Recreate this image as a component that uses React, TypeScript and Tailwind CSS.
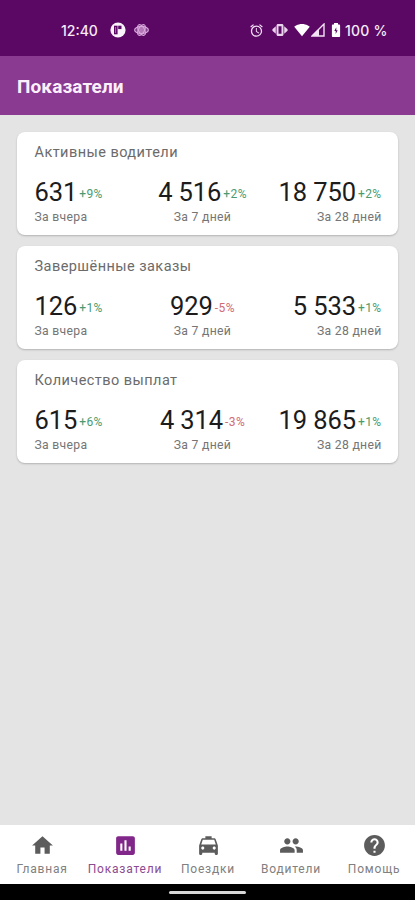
import React from "react";
import {
  MdAlarm,
  MdAssessment,
  MdHelp,
  MdHome,
  MdLocalTaxi,
  MdPeople,
  MdSignalWifi4Bar,
} from "react-icons/md";

const periods = ["За вчера", "За 7 дней", "За 28 дней"];

const metrics = [
  {
    title: "Активные водители",
    values: [["631", "+9%"], ["4 516", "+2%"], ["18 750", "+2%"]],
  },
  {
    title: "Завершённые заказы",
    values: [["126", "+1%"], ["929", "-5%"], ["5 533", "+1%"]],
  },
  {
    title: "Количество выплат",
    values: [["615", "+6%"], ["4 314", "-3%"], ["19 865", "+1%"]],
  },
];

const tabs = [
  { label: "Главная", icon: MdHome },
  { label: "Показатели", icon: MdAssessment, active: true },
  { label: "Поездки", icon: MdLocalTaxi },
  { label: "Водители", icon: MdPeople },
  { label: "Помощь", icon: MdHelp },
];

const alignment = ["items-start", "items-center", "items-end"];

const StatusBar: React.FC = () => (
  <div className="flex h-14 shrink-0 items-center bg-[#5a0864] pt-1 pr-[27px] pl-[61px] font-['Inter','Roboto',sans-serif] text-[14px] font-medium text-[#f6ebf7]">
    <span className="w-[37px] whitespace-nowrap">12:40</span>
    <svg className="ml-[12px] h-4 w-4" viewBox="0 0 16 16">
      <circle cx="8" cy="8" r="7.6" fill="#fbf3fc" />
      <path d="M4 3.7h3.6v8.6H4z" fill="#5a0864" />
      <path d="M8.2 3.7h3.3v3.4H8.2z" fill="#5a0864" />
      <path d="M5.6 5v6" stroke="#b98cc0" strokeWidth=".8" />
    </svg>
    <svg className="ml-2 h-[14px] w-[15px]" viewBox="0 0 15 14" fill="#d9a9dc55" stroke="#d9a9dc" strokeWidth="1.1">
      <ellipse cx="7.5" cy="7" rx="6.9" ry="3.6" />
      <ellipse cx="7.5" cy="7" rx="5.9" ry="3" transform="rotate(60 7.5 7)" />
      <ellipse cx="7.5" cy="7" rx="5.9" ry="3" transform="rotate(-60 7.5 7)" />
    </svg>
    <div className="ml-auto flex items-center">
      <MdAlarm className="h-[15px] w-[15px] text-[#f3e0f5]" />
      <svg className="ml-[8px] h-4 w-4" viewBox="0 0 16 16" fill="#ead3ec">
        <path d="M6 2h4c.8 0 1.5.7 1.5 1.5v9c0 .8-.7 1.5-1.5 1.5H6c-.8 0-1.5-.7-1.5-1.5v-9C4.500 2.700 5.200 2 6 2zM6.500 4.200v7.600h3V4.200z" fillRule="evenodd" />
        <path d="M3.800 4.200v7.600L.4 8.800V7.200zM12.200 4.200v7.600l3.400-3V7.200z" />
      </svg>
      <MdSignalWifi4Bar className="ml-[6px] h-4 w-4 text-white" />
      <svg className="ml-[1px] h-[14px] w-[14px]" viewBox="0 0 14 14">
        <path d="M13 1v12H1z" fill="none" stroke="#f3e2f4" strokeWidth="1.4" />
        <path d="M8 6v7H1z" fill="#f3e2f4" />
      </svg>
      <svg className="ml-[6px] h-[14px] w-[10px]" viewBox="0 0 10 14">
        <path
          d="M3 0h4v1.6h1.300c.5 0 .8.3.8.8v10.800c0 .5-.3.8-.8.8H1.700c-.5 0-.8-.3-.8-.8V2.400c0-.5.3-.8.8-.8H3zM5.300 4.200 3.300 8H4.700v3L6.700 7.200H5.300z"
          fill="#fff"
          fillRule="evenodd"
        />
      </svg>
      <span className="ml-[4px] w-[43px] whitespace-nowrap tracking-[0.2px]">100 %</span>
    </div>
  </div>
);

const MetricCard: React.FC<{ title: string; values: string[][] }> = ({ title, values }) => (
  <div className="h-[103px] rounded-lg bg-white pt-[12px] pr-[16.5px] pl-[17.5px] shadow-[0_1px_2px_rgba(0,0,0,0.22)]">
    <h2 className="text-[14.5px] leading-[18px] tracking-[0.45px] text-[#6b6b6b]">{title}</h2>
    <div className="mt-[14px] grid grid-cols-[110px_116px_1fr]">
      {values.map(([value, change], i) => (
        <div key={periods[i]} className={`flex flex-col whitespace-nowrap ${alignment[i]}`}>
          <div className="flex items-center">
            <span className="text-[25.5px] leading-[32px] tracking-[-0.1px] text-[#1c1c1c]">{value}</span>
            <span
              className={`ml-[2px] pt-[3px] text-[12px] leading-[16px] tracking-[0.4px] ${change.startsWith("-") ? "text-[#cf6b78]" : "text-[#4a9a70]"}`}
            >
              {change}
            </span>
          </div>
          <span className="text-[12.2px] leading-[18px] tracking-[0.3px] text-[#757575]">{periods[i]}</span>
        </div>
      ))}
    </div>
  </div>
);

const App: React.FC = () => {
  return (
    <div className="flex h-[900px] w-[415px] flex-col overflow-hidden bg-[#e4e4e4] font-['Roboto',sans-serif]">
      <StatusBar />
      <header className="flex h-[59px] shrink-0 items-center bg-[#8b3a92] pt-[4px] pl-[17px]">
        <h1 className="text-[19px] font-bold tracking-[0.1px] text-[#fbf1fc]">Показатели</h1>
      </header>
      <main className="flex flex-1 flex-col gap-[11px] px-[17px] pt-[17px]">
        {metrics.map((metric) => (
          <MetricCard key={metric.title} {...metric} />
        ))}
      </main>
      <nav className="grid h-[59px] shrink-0 grid-cols-5 bg-white">
        {tabs.map(({ label, icon: Icon, active }) => (
          <div
            key={label}
            className={`flex flex-col items-center pt-[8px] pl-px ${active ? "text-[#82278a]" : "text-[#5c5c5c]"}`}
          >
            <Icon className="h-[25px] w-[25px]" />
            <span
              className={`mt-[2px] text-[12px] leading-[18px] tracking-[0.8px] whitespace-nowrap ${active ? "text-[#8b4a91]" : "text-[#808080]"}`}
            >
              {label}
            </span>
          </div>
        ))}
      </nav>
      <div className="flex h-[16px] shrink-0 justify-center bg-black pt-[7px]">
        <div className="h-[3px] w-[77px] rounded-full bg-[#d8d8d8]" />
      </div>
    </div>
  );
};

export default App;
